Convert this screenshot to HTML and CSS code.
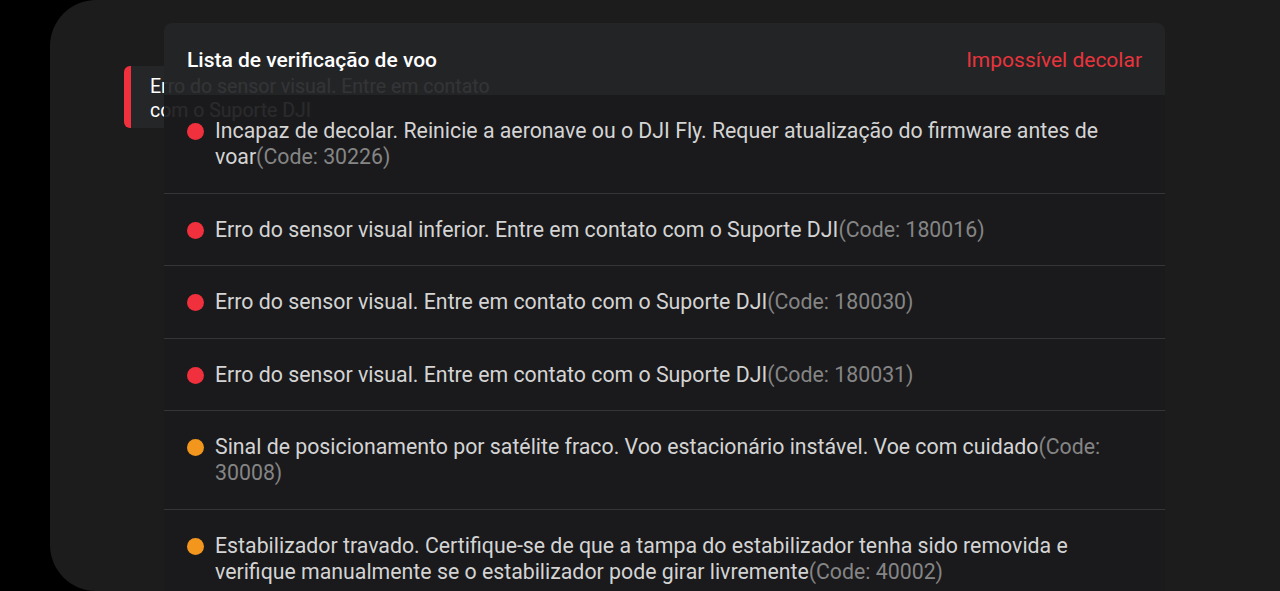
FILE: index.html
```html
<!DOCTYPE html>
<html lang="pt">
<head>
    <meta charset="UTF-8">
    <title>Lista de verificação de voo</title>
    <link rel="stylesheet" href="styles.css">
</head>
<body>
<div class="screen">
    <div class="toast">
        <p>Erro do sensor visual. Entre em contato com o Suporte DJI</p>
    </div>
    <div class="checklist">
        <div class="head">
            <h1>Lista de verificação de voo</h1>
            <span class="state">Impossível decolar</span>
        </div>
        <ul class="items">
            <li><i class="dot red"></i><p>Incapaz de decolar. Reinicie a aeronave ou o DJI Fly. Requer atualização do firmware antes de voar<span class="code">(Code: 30226)</span></p></li>
            <li><i class="dot red"></i><p>Erro do sensor visual inferior. Entre em contato com o Suporte DJI<span class="code">(Code: 180016)</span></p></li>
            <li><i class="dot red"></i><p>Erro do sensor visual. Entre em contato com o Suporte DJI<span class="code">(Code: 180030)</span></p></li>
            <li><i class="dot red"></i><p>Erro do sensor visual. Entre em contato com o Suporte DJI<span class="code">(Code: 180031)</span></p></li>
            <li><i class="dot orange"></i><p>Sinal de posicionamento por satélite fraco. Voo estacionário instável. Voe com cuidado<span class="code">(Code: 30008)</span></p></li>
            <li><i class="dot orange"></i><p>Estabilizador travado. Certifique-se de que a tampa do estabilizador tenha sido removida e verifique manualmente se o estabilizador pode girar livremente<span class="code">(Code: 40002)</span></p></li>
        </ul>
    </div>
</div>
</body>
</html>
```

FILE: styles.css
```css
* {
    padding: 0;
    margin: 0;
    box-sizing: border-box;
}
html, body {
    height: 100%;
    overflow: hidden;
}
body {
    background-color: #000;
    font-family: Roboto, "Liberation Sans", sans-serif;
}
li {
    list-style: none;
}
.screen {
    position: relative;
    margin-left: 50px;
    height: 591px;
    padding: 23px 0 0 114px;
    background-color: #1c1c1d;
    border-radius: 46px 0 0 46px;
    overflow: hidden;
}
.toast {
    position: absolute;
    left: 74px;
    top: 66px;
    width: 392px;
    height: 62px;
    padding: 9px 12px 0 19px;
    background-color: #252627;
    border-radius: 6px;
    border-left: 7px solid #f0303c;
    color: #fff;
    font-size: 19.5px;
    line-height: 24px;
}
.checklist {
    position: relative;
    width: 1001px;
}
.head {
    display: flex;
    justify-content: space-between;
    align-items: center;
    height: 72px;
    padding: 2px 23px 0 23px;
    background-color: rgba(36, 37, 39, 0.93);
    border-radius: 8px 8px 0 0;
}
.head h1 {
    font-size: 21px;
    font-weight: 500;
    color: #fff;
}
.state {
    font-size: 21px;
    color: #e8343c;
}
.items {
    background-color: rgba(26, 26, 28, 0.93);
}
.items li {
    display: flex;
    align-items: flex-start;
    padding: 23px 23px 22.5px 23px;
    border-bottom: 1px solid #343537;
}
.dot {
    flex: none;
    width: 17px;
    height: 17px;
    margin: 5px 11px 0 0;
    border-radius: 50%;
}
.red {
    background-color: #f0303c;
}
.orange {
    background-color: #f3961e;
}
.items p {
    font-size: 21.3px;
    line-height: 26px;
    color: #d4d4d4;
}
.code {
    color: #858585;
}
```
